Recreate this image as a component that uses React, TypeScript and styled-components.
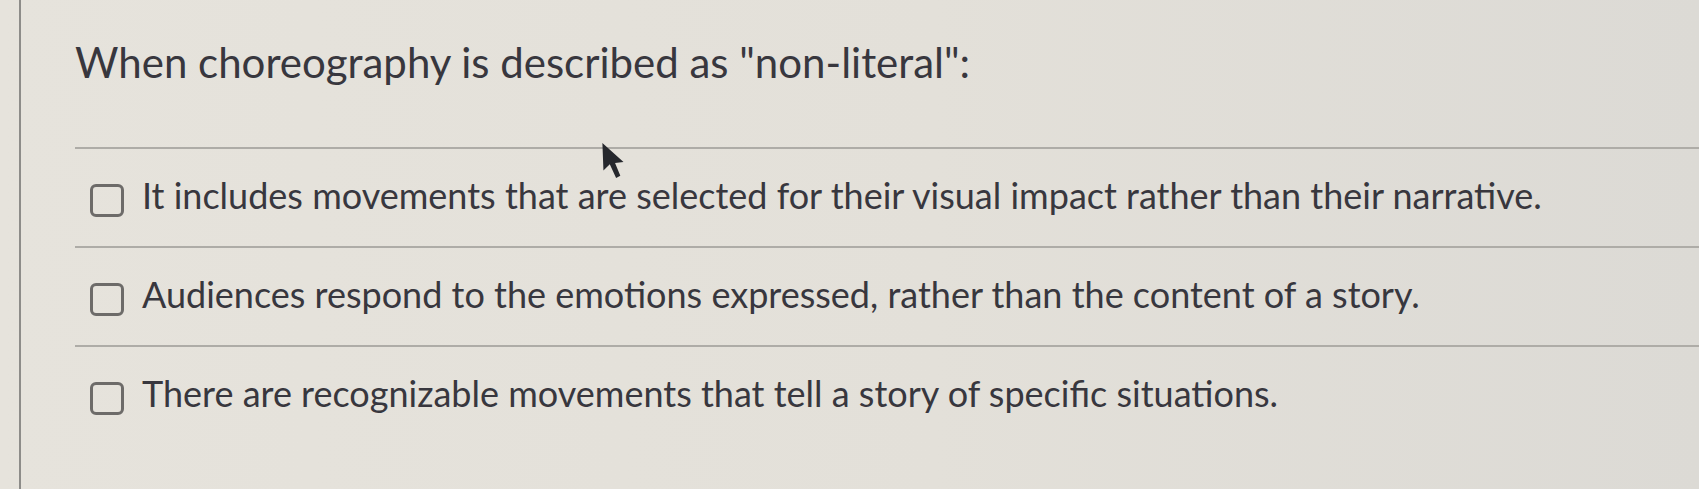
import React from 'react';
import styled, { createGlobalStyle } from 'styled-components';

const GlobalStyle = createGlobalStyle`
  html, body {
    margin: 0;
    padding: 0;
  }
  body {
    width: 1699px;
    height: 489px;
    overflow: hidden;
    background: linear-gradient(90deg, #e6e3dc 0%, #e3e0d9 55%, #dcdad5 100%);
    font-family: Lato, 'Open Sans', sans-serif;
  }
`;

const Page = styled.div`
  position: relative;
  height: 489px;
  margin-left: 19px;
  border-left: 2px solid #8d8c89;
  padding-left: 54px;
  box-sizing: border-box;
`;

const Question = styled.h1`
  margin: 0;
  padding-top: 37px;
  font-size: 42px;
  line-height: 50px;
  font-weight: 400;
  color: #38373e;
  height: 110px;
  box-sizing: content-box;
`;

const OptionList = styled.div`
  display: flex;
  flex-direction: column;
`;

const OptionRow = styled.label`
  display: flex;
  align-items: flex-start;
  gap: 18px;
  height: 99px;
  box-sizing: border-box;
  border-top: 2px solid #aeaca7;
  padding: 24px 0 0 15px;
`;

const Box = styled.span`
  flex: none;
  width: 34px;
  height: 33px;
  margin-top: 11px;
  box-sizing: border-box;
  border: 3px solid #6d6b69;
  border-radius: 6px;
`;

const OptionText = styled.span`
  font-size: 36px;
  line-height: 44px;
  color: #38373e;
  white-space: nowrap;
`;

const Cursor = styled.svg`
  position: absolute;
  left: 580px;
  top: 142px;
  width: 26px;
  height: 38px;
`;

const options = [
  'It includes movements that are selected for their visual impact rather than their narrative.',
  'Audiences respond to the emotions expressed, rather than the content of a story.',
  'There are recognizable movements that tell a story of specific situations.',
];

export default function App() {
  return (
    <>
      <GlobalStyle />
      <Page>
        <Question>When choreography is described as "non-literal":</Question>
        <OptionList>
          {options.map((text) => (
            <OptionRow key={text}>
              <Box />
              <OptionText>{text}</OptionText>
            </OptionRow>
          ))}
        </OptionList>
        <Cursor viewBox="0 0 24 36">
          <path d="M1 1 L2 27 L8 21 L14 34 L18 32 L13 20 L21 19 Z" fill="#26282d" />
        </Cursor>
      </Page>
    </>
  );
}
